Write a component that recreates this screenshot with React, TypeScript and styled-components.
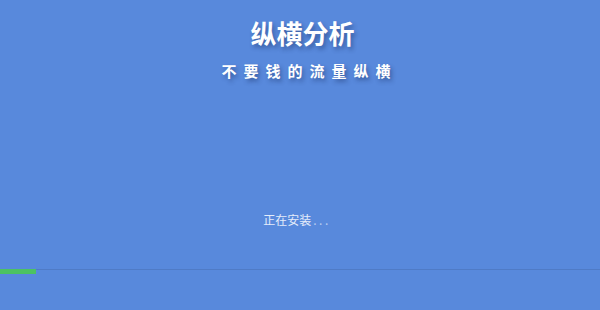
import React from "react";
import styled, { createGlobalStyle } from "styled-components";

const Global = createGlobalStyle`
  html, body { margin: 0; padding: 0; }
  body {
    background: #5889dc;
    font-family: "Noto Sans CJK SC", "Noto Sans", sans-serif;
  }
`;

const Page = styled.div`
  width: 600px;
  height: 310px;
  background: #5889dc;
  display: flex;
  flex-direction: column;
  align-items: center;
  overflow: hidden;
`;

const Title = styled.h1`
  margin: 16px 0 0;
  padding-left: 5px;
  font-size: 26px;
  line-height: 34px;
  font-weight: 700;
  color: #ffffff;
  text-shadow: 2px 3px 4px rgba(20, 40, 90, 0.45);
`;

const Subtitle = styled.h2`
  margin: 11px 0 0;
  font-size: 15px;
  line-height: 20px;
  font-weight: 700;
  letter-spacing: 7px;
  padding-left: 19px;
  color: #ffffff;
  text-shadow: 2px 3px 4px rgba(20, 40, 90, 0.45);
`;

const Status = styled.div`
  margin-top: 131px;
  margin-left: -6px;
  font-size: 12px;
  line-height: 16px;
  color: #e4ecfa;
  display: flex;
  align-items: baseline;
`;

const Dots = styled.span`
  letter-spacing: 2.5px;
  color: #b9cdf0;
  margin-left: 2px;
`;

const Track = styled.div`
  margin-top: 41px;
  width: 100%;
  height: 4px;
  border-top: 1px solid #4f7bc6;
  box-sizing: border-box;
  position: relative;
`;

const Fill = styled.div`
  position: absolute;
  left: 0;
  top: -1px;
  height: 5px;
  background: #4cc262;
`;

export default function App() {
  const progress = 6;
  return (
    <>
      <Global />
      <Page>
        <Title>纵横分析</Title>
        <Subtitle>不要钱的流量纵横</Subtitle>
        <Status>
          正在安装<Dots>...</Dots>
        </Status>
        <Track>
          <Fill style={{ width: `${progress}%` }} />
        </Track>
      </Page>
    </>
  );
}
